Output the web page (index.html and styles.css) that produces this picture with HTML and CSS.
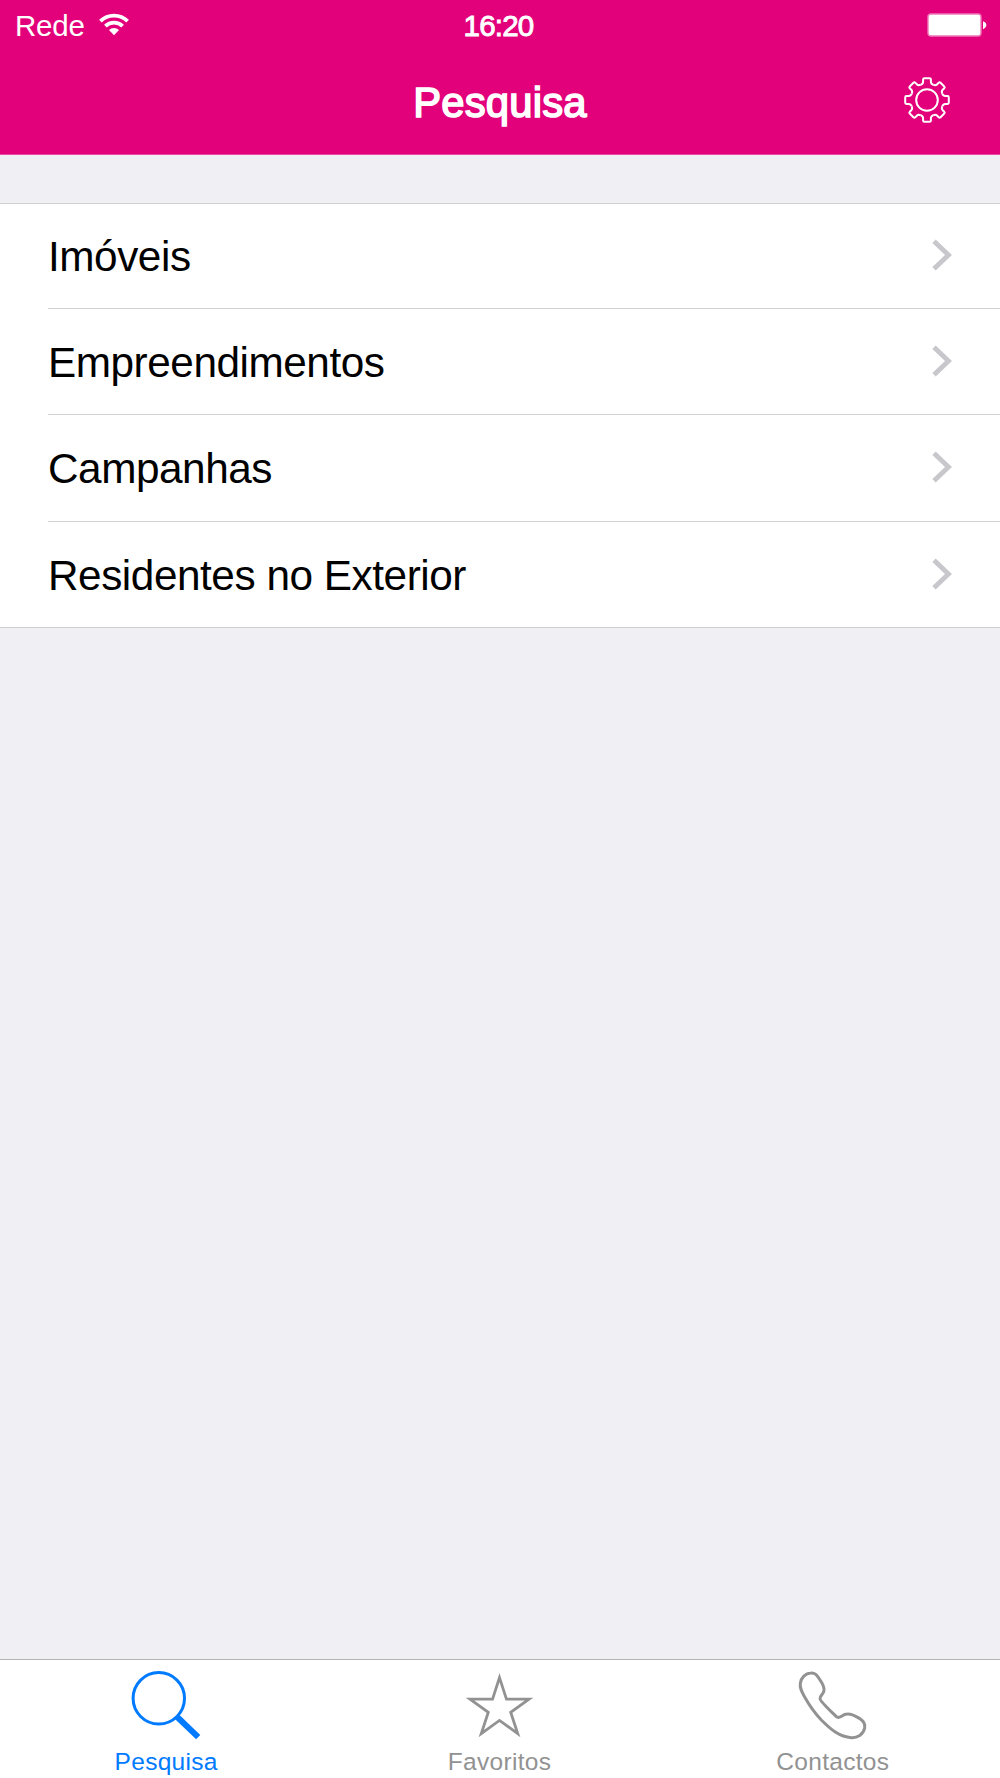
FILE: index.html
```html
<!DOCTYPE html>
<html lang="pt">
<head>
  <meta charset="UTF-8">
  <meta name="viewport" content="width=device-width, initial-scale=1.0">
  <title>Pesquisa</title>
  <link rel="stylesheet" href="styles.css">
</head>
<body>
  <header class="header">
    <div class="status-bar">
      <div class="carrier">
        <span>Rede</span>
        <svg class="wifi" width="30" height="23" viewBox="-15 -22 30 23">
          <path d="M-13.6-13.9A19.5 19.5 0 0 1 13.6-13.9M-8.6-8.8A12.3 12.3 0 0 1 8.6-8.8" fill="none" stroke="#fff" stroke-width="3.8"/>
          <path d="M0 0.3L-5-4.9A7 7 0 0 1 5-4.9Z" fill="#fff"/>
        </svg>
      </div>
      <span class="time">16:20</span>
      <svg class="battery" width="60" height="24" viewBox="0 0 60 24">
        <rect x="1" y="1" width="53" height="22" rx="3" fill="#fff" stroke="#f07abb" stroke-width="1.4"/>
        <path d="M56 8.2Q59.4 9.5 59.4 12T56 16.2Z" fill="#fff"/>
      </svg>
    </div>
    <div class="nav-bar">
      <h1>Pesquisa</h1>
      <a href="#" class="settings">
        <svg width="48" height="48" viewBox="-24 -24 48 48" fill="none" stroke="#fff" stroke-width="2">
          <defs>
            <path id="tooth" d="M-6.3-15.2C-4.6-15.9-3.9-16.9-3.9-18.3V-20.5Q-3.9-21.8-2.6-21.8H2.6Q3.9-21.8 3.9-20.5V-18.3C3.9-16.9 4.6-15.9 6.3-15.2"/>
          </defs>
          <circle r="10.8"/>
          <use href="#tooth"/>
          <use href="#tooth" transform="rotate(45)"/>
          <use href="#tooth" transform="rotate(90)"/>
          <use href="#tooth" transform="rotate(135)"/>
          <use href="#tooth" transform="rotate(180)"/>
          <use href="#tooth" transform="rotate(225)"/>
          <use href="#tooth" transform="rotate(270)"/>
          <use href="#tooth" transform="rotate(315)"/>
        </svg>
      </a>
    </div>
  </header>

  <main class="content">
    <ul class="menu">
      <li><a href="#">Imóveis
        <svg class="arrow" width="20" height="34" viewBox="0 0 20 34"><path d="M2 3.2L16.5 17L2 30.8"/></svg>
      </a></li>
      <li><a href="#">Empreendimentos
        <svg class="arrow" width="20" height="34" viewBox="0 0 20 34"><path d="M2 3.2L16.5 17L2 30.8"/></svg>
      </a></li>
      <li><a href="#">Campanhas
        <svg class="arrow" width="20" height="34" viewBox="0 0 20 34"><path d="M2 3.2L16.5 17L2 30.8"/></svg>
      </a></li>
      <li><a href="#">Residentes no Exterior
        <svg class="arrow" width="20" height="34" viewBox="0 0 20 34"><path d="M2 3.2L16.5 17L2 30.8"/></svg>
      </a></li>
    </ul>
  </main>

  <nav class="tab-bar">
    <a href="#" class="tab active">
      <svg width="72" height="72" viewBox="0 0 72 72">
        <circle cx="28.8" cy="29.3" r="25.7" stroke-width="3"/>
        <path d="M46.7 47.5L68.2 68.2" stroke-width="6"/>
      </svg>
      <span>Pesquisa</span>
    </a>
    <a href="#" class="tab">
      <svg width="72" height="72" viewBox="-36.5 -39.6 72 72">
        <path d="M0-31L6.95-9.43H29.5L11.2 3.7L18.2 25L0 11.8L-18.2 25L-11.2 3.7L-29.5-9.43H-6.95Z" stroke-width="2.8"/>
      </svg>
      <span>Favoritos</span>
    </a>
    <a href="#" class="tab">
      <svg width="72" height="72" viewBox="111 87 216 216">
        <path d="M152 99C166 97 171 107 178 117C187 130 193 137 192 151C191 163 180 166 180 176C180 183 219 220 229 230C240 239 245 222 262 222C276 221 286 228 298 235C310 243 317 252 314 264C310 284 292 294 274 293C238 291 212 268 184 240C164 219 148 196 134 171C125 155 119 145 121 130C123 112 137 100 152 99Z" stroke-width="9"/>
      </svg>
      <span>Contactos</span>
    </a>
  </nav>
</body>
</html>
```
FILE: styles.css
```css
* {
  box-sizing: border-box;
}
body {
  margin: 0;
  height: 1778px;
  display: flex;
  flex-direction: column;
  background: #efeff4;
  font-family: "Liberation Sans", Arial, sans-serif;
}
a {
  color: inherit;
  text-decoration: none;
}
svg {
  display: block;
  flex: none;
}

/* header */
.header {
  height: 155px;
  background: #e3007b;
  border-bottom: 1px solid #ea4ba2;
  color: #fff;
}
.status-bar {
  display: grid;
  grid-template-columns: 1fr auto 1fr;
  align-items: center;
  height: 50px;
  padding: 0 13px 0 15px;
  font-size: 29.5px;
}
.carrier {
  display: flex;
  align-items: center;
  gap: 14px;
  padding-top: 1px;
  letter-spacing: -0.2px;
}
.wifi {
  margin-bottom: 3px;
}
.time {
  padding: 1px 5px 0 0;
  letter-spacing: -0.8px;
  -webkit-text-stroke: 0.9px #fff;
}
.battery {
  justify-self: end;
}
.nav-bar {
  display: grid;
  grid-template-columns: 1fr auto 1fr;
  align-items: center;
  height: 104px;
  padding: 0 48px;
}
.nav-bar h1 {
  grid-column: 2;
  margin: 0;
  padding-top: 1px;
  font-size: 41.8px;
  font-weight: normal;
  letter-spacing: 0.2px;
  -webkit-text-stroke: 1.6px #fff;
}
.settings {
  justify-self: end;
  padding: 0 1px 5px 0;
}

/* list */
.content {
  flex: 1;
  padding-top: 48px;
}
.menu {
  margin: 0;
  padding: 0 0 0 48px;
  list-style: none;
  background: #fff;
  border-top: 1px solid #cfcfd2;
  border-bottom: 1px solid #cfcfd2;
}
.menu li {
  height: 106.2px;
  padding-top: 1px;
  margin-top: -1px;
  border-bottom: 1px solid #d2d2d5;
}
.menu li + li {
  margin-top: 0;
}
.menu li:last-child {
  height: 105.4px;
  border-bottom: none;
}
.menu a {
  display: flex;
  justify-content: space-between;
  align-items: center;
  height: 105px;
  padding: 1px 48px 0 0;
  font-size: 42.3px;
  letter-spacing: -0.45px;
  color: #000;
}
.arrow {
  margin-bottom: 4px;
}
.arrow path {
  fill: none;
  stroke: #c7c7cc;
  stroke-width: 4.8;
}

/* tabs */
.tab-bar {
  display: flex;
  height: 119px;
  background: #fff;
  border-top: 1px solid #b2b2b4;
}
.tab {
  flex: 1;
  display: flex;
  flex-direction: column;
  align-items: center;
  padding: 9px 1px 0 0;
  font-size: 24.5px;
  line-height: 28px;
  letter-spacing: 0.3px;
  color: #929292;
}
.tab span {
  margin-top: 7px;
}
.tab path,
.tab circle {
  fill: none;
  stroke: currentColor;
}
.tab.active {
  color: #007aff;
}
```
